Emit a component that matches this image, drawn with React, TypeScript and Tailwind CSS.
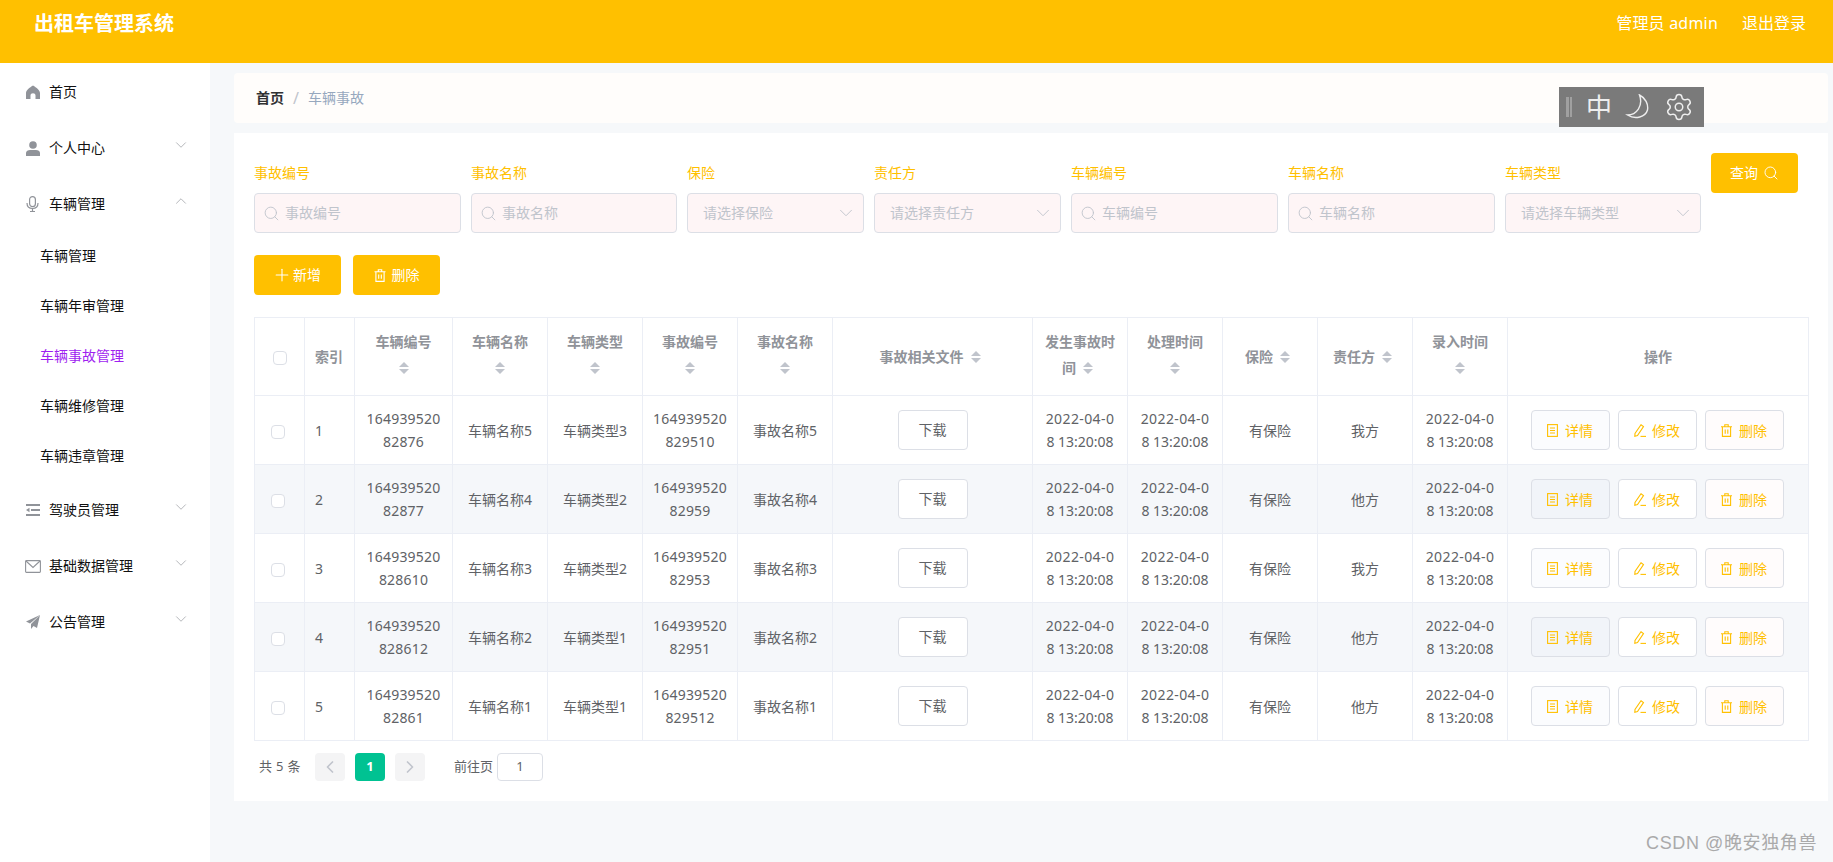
import { ChevronDown, ChevronLeft, ChevronRight, ChevronUp, Plus, Search, Settings } from "lucide-react";

const FONT = "font-['Noto_Sans','Noto_Sans_CJK_SC',sans-serif]";

const rows = [
  { id: 1, carNo: ["164939520", "82876"], car: "车辆名称5", type: "车辆类型3", no: ["164939520", "829510"], name: "事故名称5", side: "我方" },
  { id: 2, carNo: ["164939520", "82877"], car: "车辆名称4", type: "车辆类型2", no: ["164939520", "82959"], name: "事故名称4", side: "他方" },
  { id: 3, carNo: ["164939520", "828610"], car: "车辆名称3", type: "车辆类型2", no: ["164939520", "82953"], name: "事故名称3", side: "我方" },
  { id: 4, carNo: ["164939520", "828612"], car: "车辆名称2", type: "车辆类型1", no: ["164939520", "82951"], name: "事故名称2", side: "他方" },
  { id: 5, carNo: ["164939520", "82861"], car: "车辆名称1", type: "车辆类型1", no: ["164939520", "829512"], name: "事故名称1", side: "他方" },
];

// icons that the packages don't have in this shape
function HomeIcon() {
  return (
    <svg width="14" height="14" viewBox="0 0 14 14" fill="#909399">
      <path d="M7 0.5 C3.5 2.5 0 5.5 0 8 V14 H4.5 V10.5 C4.5 9 5.6 8.2 7 8.2 C8.4 8.2 9.5 9 9.5 10.5 V14 H14 V8 C14 5.5 10.5 2.5 7 0.5Z" />
    </svg>
  );
}

function UserIcon() {
  return (
    <svg width="14" height="15" viewBox="0 0 14 15" fill="#909399">
      <circle cx="7" cy="4" r="3.8" />
      <path d="M0 12 C0 10 2 9 4 9 H10 C12 9 14 10 14 12 V15 H0Z" />
    </svg>
  );
}

function MicIcon() {
  return (
    <svg width="13" height="16" viewBox="0 0 13 16" fill="none" stroke="#909399" strokeWidth="1.2">
      <rect x="3.6" y="0.6" width="5.8" height="10" rx="2.9" />
      <path d="M1 7 C1 10.5 3 12.5 6.5 12.5 C10 12.5 12 10.5 12 7 M6.5 12.5 V15.5 M4 15.5 H9" />
    </svg>
  );
}

function IndentIcon() {
  return (
    <svg width="14" height="12" viewBox="0 0 14 12" fill="#909399">
      <rect x="0" y="0" width="14" height="2" />
      <rect x="5" y="5" width="9" height="2" />
      <rect x="0" y="10" width="14" height="2" />
      <path d="M0 6 L3.5 3.8 V8.2Z" />
    </svg>
  );
}

function MailIcon() {
  return (
    <svg width="16" height="13" viewBox="0 0 16 13" fill="none" stroke="#909399" strokeWidth="1.1">
      <rect x="0.6" y="0.6" width="14.8" height="11.8" rx="0.8" />
      <path d="M1 1 L8 7.5 L15 1" />
    </svg>
  );
}

function PlaneIcon() {
  return (
    <svg width="14" height="14" viewBox="0 0 14 14" fill="#909399">
      <path d="M14 0 L0 6.5 L4 8.5 Z" />
      <path d="M14 0 L5 9 L5 14 L7.5 11 L11 13Z" />
    </svg>
  );
}

function DocIcon() {
  return (
    <svg width="11" height="13" viewBox="0 0 11 13" fill="none" stroke="#ffc000" strokeWidth="1.1" className="shrink-0">
      <rect x="0.6" y="0.6" width="9.8" height="11.8" />
      <path d="M3 4 H8 M3 6.5 H8 M3 9 H8" />
    </svg>
  );
}

function EditIcon() {
  return (
    <svg width="12" height="13" viewBox="0 0 12 13" fill="none" stroke="#ffc000" strokeWidth="1.1" className="shrink-0">
      <path d="M7 0.8 L9.5 2.6 L3.5 11.5 L0.8 12.2 L1 9.4Z" />
      <path d="M6.5 12.4 H12" />
    </svg>
  );
}

function TrashIcon({ color = "#ffc000", width = 11 }: { color?: string; width?: number }) {
  return (
    <svg width={width} height="13" viewBox="0 0 11 13" fill="none" stroke={color} strokeWidth="1.1" className="shrink-0">
      <path d="M0 2.8 H11 M3.8 2.5 V0.7 H7.2 V2.5 M1.4 3 V12.4 H9.6 V3 M4.2 5.5 V9.8 M6.8 5.5 V9.8" />
    </svg>
  );
}

function SortCaret() {
  return (
    <svg width="10" height="12" viewBox="0 0 10 12" fill="#c0c4cc" className="shrink-0">
      <path d="M5 0 L10 5 H0Z" />
      <path d="M5 12 L0 7 H10Z" />
    </svg>
  );
}

function StackHead({ title }: { title: string }) {
  return (
    <div className="flex flex-col items-center">
      <span className="leading-[23px]">{title}</span>
      <div className="flex h-[31px] items-center">
        <SortCaret />
      </div>
    </div>
  );
}

function InlineHead({ title }: { title: string }) {
  return (
    <div className="flex items-center justify-center gap-[7px] pr-[5px]">
      <span>{title}</span>
      <SortCaret />
    </div>
  );
}

function DateCell() {
  return (
    <>
      <span className="tracking-[0.4px]">2022-04-0</span>
      <br />
      8 13:20:08
    </>
  );
}

function Field({ label, width, placeholder, select }: { label: string; width: string; placeholder: string; select?: boolean }) {
  return (
    <div className={width}>
      <div className="h-10 text-sm leading-10 text-[#ffc000]">{label}</div>
      {select ? (
        <div className="flex h-10 items-center justify-between rounded border border-[#dcdfe6] bg-[#fef5f6] pl-[15px] pr-[6px] text-sm text-[#c0c4cc]">
          <span>{placeholder}</span>
          <ChevronDown size={22} strokeWidth={1} color="#c0c4cc" />
        </div>
      ) : (
        <div className="flex h-10 items-center gap-[5px] rounded border border-[#dcdfe6] bg-[#fef5f6] pl-2 text-sm text-[#c0c4cc]">
          <Search size={17} strokeWidth={1.3} color="#c0c4cc" />
          <span>{placeholder}</span>
        </div>
      )}
    </div>
  );
}

function MenuItem({ icon, label, arrow }: { icon: any; label: string; arrow?: "up" | "down" }) {
  return (
    <div className="flex h-14 items-center pl-6 pr-5 text-sm text-[#111]">
      <div className="flex w-[17px] shrink-0 justify-center">{icon}</div>
      <span className="ml-2">{label}</span>
      {arrow === "down" && <ChevronDown size={18} strokeWidth={0.9} color="#909399" className="ml-auto -translate-y-[3px]" />}
      {arrow === "up" && <ChevronUp size={18} strokeWidth={0.9} color="#909399" className="ml-auto -translate-y-[3px]" />}
    </div>
  );
}

export default function App() {
  const th = "p-0 border border-[#ebeef5] text-center align-middle text-sm font-bold text-[#909399]";
  const td = "p-0 border border-[#ebeef5] text-center align-middle text-sm leading-[23px] text-[#606266]";

  return (
    <div className={`${FONT} relative flex h-[862px] flex-col overflow-hidden bg-[#f6f8fa]`}>
      {/* HEADER */}
      <header className="flex h-[63px] shrink-0 items-start justify-between bg-[#ffc000] pl-[34px] pr-[27px] text-white">
        <h1 className="text-xl font-bold leading-[48px]">出租车管理系统</h1>
        <div className="flex gap-6 text-base leading-[47px]">
          <span className="tracking-[0.2px]">管理员 admin</span>
          <span>退出登录</span>
        </div>
      </header>

      <div className="flex min-h-0 flex-1">
        {/* SIDEBAR */}
        <aside className="w-[210px] shrink-0 bg-white pt-px">
          <MenuItem icon={<HomeIcon />} label="首页" />
          <MenuItem icon={<UserIcon />} label="个人中心" arrow="down" />
          <MenuItem icon={<MicIcon />} label="车辆管理" arrow="up" />
          <div className="-mt-px mb-px text-sm text-[#111]">
            <div className="flex h-[50px] items-center pl-10">车辆管理</div>
            <div className="flex h-[50px] items-center pl-10">车辆年审管理</div>
            <div className="flex h-[50px] items-center pl-10 text-[#9f1ff0]">车辆事故管理</div>
            <div className="flex h-[50px] items-center pl-10">车辆维修管理</div>
            <div className="flex h-[50px] items-center pl-10">车辆违章管理</div>
          </div>
          <MenuItem icon={<IndentIcon />} label="驾驶员管理" arrow="down" />
          <MenuItem icon={<MailIcon />} label="基础数据管理" arrow="down" />
          <MenuItem icon={<PlaneIcon />} label="公告管理" arrow="down" />
        </aside>

        {/* MAIN */}
        <main className="min-w-0 flex-1 pl-6 pr-[5px] pt-[10px]">
          <div className="flex h-[50px] items-center rounded bg-[#fffdfb] pl-[22px] text-sm">
            <span className="font-bold text-[#303133]">首页</span>
            <span className="mx-[9px] text-base text-[#c0c4cc]">/</span>
            <span className="text-[#97a8be]">车辆事故</span>
          </div>

          <section className="mt-[10px] h-[668px] bg-white px-5 pt-5">
            {/* SEARCH FORM */}
            <div className="flex gap-[10px]">
              <Field label="事故编号" width="w-[207px]" placeholder="事故编号" />
              <Field label="事故名称" width="w-[206px]" placeholder="事故名称" />
              <Field label="保险" width="w-[177px]" placeholder="请选择保险" select />
              <Field label="责任方" width="w-[187px]" placeholder="请选择责任方" select />
              <Field label="车辆编号" width="w-[207px]" placeholder="车辆编号" />
              <Field label="车辆名称" width="w-[207px]" placeholder="车辆名称" />
              <Field label="车辆类型" width="w-[196px]" placeholder="请选择车辆类型" select />
              <button className="flex h-10 w-[87px] items-center justify-center gap-[5px] rounded bg-[#ffc000] text-sm text-white">
                查询 <Search size={16} strokeWidth={1.4} />
              </button>
            </div>

            {/* ACTIONS */}
            <div className="mt-[22px] flex gap-3">
              <button className="flex h-10 w-[87px] items-center gap-px rounded bg-[#ffc000] pl-[18px] text-sm text-white">
                <Plus size={20} strokeWidth={1.3} /> 新增
              </button>
              <button className="flex h-10 w-[87px] items-center justify-center gap-[6px] rounded bg-[#ffc000] text-sm text-white">
                <TrashIcon color="#ffffff" width={12} /> 删除
              </button>
            </div>

            {/* TABLE */}
            <table className="mt-[22px] w-[1554px] table-fixed border-collapse">
              <colgroup>
                <col className="w-[50px]" />
                <col className="w-[50px]" />
                <col className="w-[98px]" />
                <col className="w-[95px]" />
                <col className="w-[95px]" />
                <col className="w-[95px]" />
                <col className="w-[95px]" />
                <col className="w-[200px]" />
                <col className="w-[95px]" />
                <col className="w-[95px]" />
                <col className="w-[95px]" />
                <col className="w-[95px]" />
                <col className="w-[95px]" />
                <col className="w-[301px]" />
              </colgroup>
              <thead>
                <tr className="h-[78px]">
                  <th className={th}>
                    <div className="ml-[18px] mt-[2px] h-[14px] w-[14px] rounded-sm border border-[#dcdfe6] bg-white" />
                  </th>
                  <th className={`${th} pl-[10px] text-left`}>索引</th>
                  <th className={th}><StackHead title="车辆编号" /></th>
                  <th className={th}><StackHead title="车辆名称" /></th>
                  <th className={th}><StackHead title="车辆类型" /></th>
                  <th className={th}><StackHead title="事故编号" /></th>
                  <th className={th}><StackHead title="事故名称" /></th>
                  <th className={th}><InlineHead title="事故相关文件" /></th>
                  <th className={th}>
                    <div className="flex flex-col items-center">
                      <span className="leading-[23px]">发生事故时</span>
                      <div className="flex h-[31px] items-center gap-[7px] pr-[5px]">
                        <span>间</span>
                        <SortCaret />
                      </div>
                    </div>
                  </th>
                  <th className={th}><StackHead title="处理时间" /></th>
                  <th className={th}><InlineHead title="保险" /></th>
                  <th className={th}><InlineHead title="责任方" /></th>
                  <th className={th}><StackHead title="录入时间" /></th>
                  <th className={th}>操作</th>
                </tr>
              </thead>
              <tbody>
                {rows.map((r) => {
                  const striped = r.id % 2 === 0;
                  return (
                    <tr key={r.id} className={`h-[69px] ${striped ? "bg-[#f5f7fa]" : "bg-white"}`}>
                      <td className={td}>
                        <div className="ml-4 mt-[3px] h-[14px] w-[14px] rounded-sm border border-[#dcdfe6] bg-white" />
                      </td>
                      <td className={`${td} pl-[10px] text-left`}>{r.id}</td>
                      <td className={`${td} tracking-[0.2px]`}>{r.carNo[0]}<br />{r.carNo[1]}</td>
                      <td className={td}>{r.car}</td>
                      <td className={td}>{r.type}</td>
                      <td className={`${td} tracking-[0.2px]`}>{r.no[0]}<br />{r.no[1]}</td>
                      <td className={td}>{r.name}</td>
                      <td className={td}>
                        <button className="h-10 w-[70px] rounded border border-[#dcdfe6] bg-white text-sm text-[#606266]">下载</button>
                      </td>
                      <td className={td}><DateCell /></td>
                      <td className={td}><DateCell /></td>
                      <td className={td}>有保险</td>
                      <td className={td}>{r.side}</td>
                      <td className={td}><DateCell /></td>
                      <td className={td}>
                        <div className="flex justify-center gap-2 pr-[2px] text-[#ffc000]">
                          <button className={`flex h-10 w-[79px] items-center justify-center gap-[7px] rounded border border-[#dcdfe6] ${striped ? "bg-[#f1f4f9]" : "bg-[#fbfcfe]"}`}>
                            <DocIcon /> 详情
                          </button>
                          <button className="flex h-10 w-[79px] items-center justify-center gap-[6px] rounded border border-[#dcdfe6] bg-white">
                            <EditIcon /> 修改
                          </button>
                          <button className="flex h-10 w-[79px] items-center justify-center gap-[7px] rounded border border-[#dcdfe6] bg-[#fffcfc]">
                            <TrashIcon /> 删除
                          </button>
                        </div>
                      </td>
                    </tr>
                  );
                })}
              </tbody>
            </table>

            {/* PAGINATION */}
            <div className="mt-3 flex h-7 items-center pl-[5px] text-[13px] text-[#606266]">
              <span className="w-[56px] tracking-[0.3px]">共 5 条</span>
              <div className="flex gap-[10px]">
                <div className="flex h-7 w-[30px] items-center justify-center rounded-sm bg-[#f4f4f5]">
                  <ChevronLeft size={20} color="#c0c4cc" strokeWidth={2} />
                </div>
                <div className="flex h-7 w-[30px] items-center justify-center rounded-sm bg-[#00c292] font-bold text-white">1</div>
                <div className="flex h-7 w-[30px] items-center justify-center rounded-sm bg-[#f4f4f5]">
                  <ChevronRight size={20} color="#c0c4cc" strokeWidth={2} />
                </div>
              </div>
              <span className="ml-[29px]">前往页</span>
              <div className="ml-1 flex h-7 w-[46px] items-center justify-center rounded border border-[#dcdfe6] bg-white">1</div>
            </div>
          </section>
        </main>
      </div>

      {/* FLOATING TOOLBAR */}
      <div className="absolute left-[1559px] top-[87px] flex h-10 w-[145px] items-center bg-[#7a7a7a] pl-[7px] text-[#eeeeee]">
        <div className="h-5 w-[3px] bg-[#a0a0a0]" />
        <div className="ml-px h-5 w-[2px] bg-[#a0a0a0]" />
        <span className="ml-[14px] text-[26px] leading-none">中</span>
        <svg width="25" height="26" viewBox="0 0 24 26" fill="none" stroke="#eeeeee" strokeWidth="1.4" className="ml-[13px]">
          <path d="M14 1 C20 4 23 10 22 16 C20 23 10 26 2 21 C11 21 18 12 14 1Z" />
        </svg>
        <Settings size={30} strokeWidth={1.2} color="#eeeeee" className="ml-[14px]" />
      </div>

      {/* WATERMARK */}
      <div className="absolute right-4 top-[831px] font-['Liberation_Sans','Noto_Sans_CJK_SC',sans-serif] text-lg leading-6 tracking-[0.6px] text-[#aaaaaa]">
        CSDN @晚安独角兽
      </div>
    </div>
  );
}
